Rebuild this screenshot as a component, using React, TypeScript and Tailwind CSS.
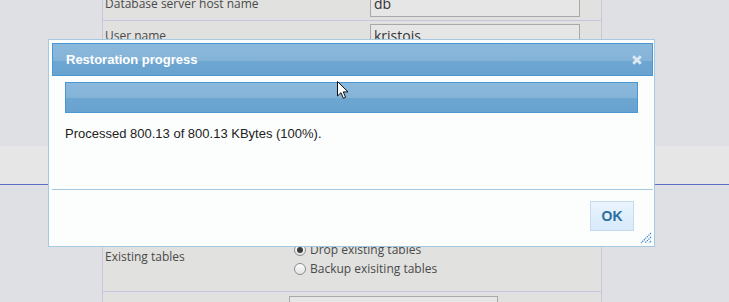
import React from 'react'

function Radio({ checked }: { checked?: boolean }) {
  return (
    <span className="flex h-[12px] w-[12px] items-center justify-center rounded-full border border-[#8c8c8c] bg-[linear-gradient(#fdfdfd,#e4e4e4)]">
      {checked && <span className="h-[6px] w-[6px] rounded-full bg-[#3a3a3a]" />}
    </span>
  )
}

export default function App() {
  return (
    <div className="relative h-[302px] w-[729px] overflow-hidden bg-[#dfe0e4] font-['Open_Sans',sans-serif] text-[12px] text-[#4a4a4a]">
      {/* settings form behind the dialog */}
      <div className="-mt-[12px] ml-[102px] w-[500px] border-x border-[#c9c5de] bg-[#e1e1df]">
        <div className="flex h-[33px] border-b border-[#c9c5de] pl-[2px]">
          <div className="w-[265px] pt-[8px] leading-[16px]">Database server host name</div>
          <div className="mt-[4px] h-[25px] w-[210px] border border-[#a9a9a9] bg-[#e6e6e6] px-[3px] text-[14px] leading-[22px] text-[#333]">
            db
          </div>
        </div>
        <div className="flex h-[41px] border-b border-[#c9c5de] pl-[2px]">
          <div className="w-[265px] pt-[7px] leading-[16px]">User name</div>
          <div className="mt-[3px] h-[25px] w-[210px] border border-[#a9a9a9] bg-[#e6e6e6] px-[3px] text-[14px] leading-[22px] text-[#333]">
            kristois
          </div>
        </div>
        <div className="h-[170px] border-b border-[#c9c5de]" />
        <div className="flex h-[60px] border-b border-[#c9c5de] pl-[2px]">
          <div className="w-[189px] pt-[17px] leading-[16px]">Existing tables</div>
          <div className="flex flex-col pt-[8px] leading-[19px]">
            <label className="flex items-center gap-[4px]">
              <Radio checked />
              Drop existing tables
            </label>
            <label className="flex items-center gap-[4px]">
              <Radio />
              Backup exisiting tables
            </label>
          </div>
        </div>
        <div className="h-[20px] pl-[186px] pt-[4px]">
          <div className="h-[24px] w-[209px] border border-[#a9a9a9] bg-[#e6e6e6] px-[8px] pt-[1px] text-[13px] leading-[20px] text-[#333]">
            l
          </div>
        </div>
      </div>

      {/* overlay strip */}
      <div className="absolute left-0 top-[146px] h-[39px] w-full border-b border-[#5d6dc3] bg-[#e6e6e6]" />

      {/* restoration dialog */}
      <div className="absolute left-[48px] top-[39px] flex h-[208px] w-[607px] flex-col border border-[#a6c9e2] bg-[#fcfdfd] pl-[3px] pr-[1px] pt-[3px] font-['Liberation_Sans',Arial,sans-serif]">
        <div className="flex h-[33px] items-center justify-between border border-[#4b97d4] bg-[linear-gradient(#8bb9dc,#84b3d8_56%,#6da6d1_56%,#68a2cf)] pl-[13px] pr-[10px]">
          <span className="text-[13px] font-bold text-white">Restoration progress</span>
          <svg width="10" height="10" viewBox="0 0 10 10" className="mt-[1px]">
            <path d="M1.2 1.2L8.8 8.8M8.8 1.2L1.2 8.8" stroke="#dce9f5" strokeWidth="2.8" />
          </svg>
        </div>
        <div className="h-[113px] pl-[13px]">
          <div className="mt-[6px] h-[31px] w-[573px] border border-[#4b97d4] bg-[linear-gradient(#8bb9dc,#84b3d8_52%,#6da6d1_52%,#68a2cf)]" />
          <p className="mt-[13px] text-[13px] leading-[15px] text-[#222]">
            Processed 800.13 of 800.13 KBytes (100%).
          </p>
        </div>
        <div className="flex h-[57px] justify-end border-t border-[#a6c9e2] pr-[19px]">
          <button className="mt-[11px] h-[30px] w-[44px] border border-[#c5dbec] bg-[linear-gradient(#eaf4fd,#dfeefc_55%,#d9eafa)] text-[14px] font-bold text-[#2e6e9e]">
            OK
          </button>
        </div>
        <svg width="12" height="12" viewBox="0 0 12 12" className="absolute bottom-[2px] right-[2px]">
          <path d="M11 1L1 11M11 5L5 11M11 9L9 11" stroke="#3f8bd3" strokeWidth="1.2" strokeDasharray="1.4 0.8" />
        </svg>
      </div>

      {/* mouse pointer */}
      <svg width="13" height="20" viewBox="0 0 13 20" className="absolute left-[336px] top-[80px]">
        <path d="M1.5 1.5V16L5 12.7L7.4 18.3L9.6 17.3L7.3 11.9H12Z" fill="#fff" stroke="#111" strokeWidth="1" strokeLinejoin="round" />
      </svg>
    </div>
  )
}
